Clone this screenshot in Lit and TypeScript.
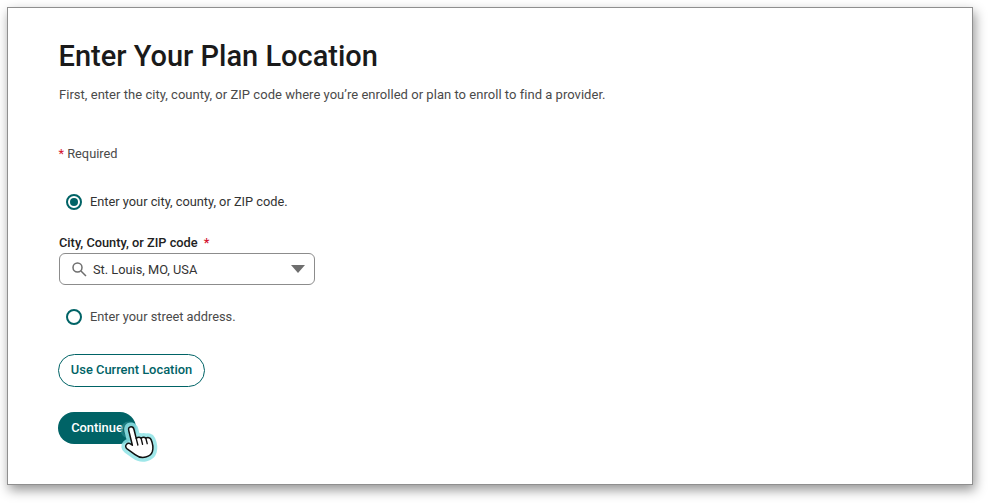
import { LitElement, html, css } from 'lit';
import { customElement } from 'lit/decorators.js';

const HAND =
  'M8.500 4C10 4 11 5.100 11 6.700V14c1.500-.6 3-.3 3.800.8 1.500-.6 3-.2 3.700 1 1.700-.6 3.500.3 3.800 2.100.6 3.500.2 6.800-1.300 9.500-1.200 2-3.500 3-6.200 3-3.400 0-5.700-1.300-7.800-4L1.900 20.400c-1-1.300-.8-2.800.3-3.500 1.100-.8 2.600-.5 3.600.7l.9 1V6.700C6.700 5.100 7.200 4 8.500 4z';

@customElement('app-root')
export class AppRoot extends LitElement {
  static styles = css`
    :host {
      display: block;
      width: 1000px;
      height: 503px;
      padding: 7px 27px 18px 7px;
      box-sizing: border-box;
      background: #fff;
      overflow: hidden;
      font-family: Roboto, 'Liberation Sans', sans-serif;
      color: #4a4a4a;
    }

    .card {
      height: 478px;
      box-sizing: border-box;
      padding: 30px 50px 0;
      background: #fff;
      border: 1px solid #8f8f8f;
      box-shadow: 2px 5px 11px rgba(0, 0, 0, 0.42);
    }

    h1 {
      margin: 0 0 0 0.5px;
      font-size: 29px;
      line-height: 36px;
      font-weight: 500;
      color: #1a1a1a;
    }

    .intro {
      margin: 12px 0 0 1px;
      font-size: 13px;
      line-height: 18px;
      letter-spacing: 0.03px;
    }

    .required {
      margin-top: 41px;
      font-size: 12.8px;
      line-height: 18px;
    }

    .required .star {
      margin-left: 0.5px;
    }

    .star {
      color: #d3132f;
    }

    .radio-row {
      display: flex;
      align-items: center;
      gap: 8px;
      margin-left: 8px;
      font-size: 12.8px;
      line-height: 18px;
    }

    .radio-row.first {
      margin-top: 30px;
    }

    .radio-row.second {
      margin-top: 23px;
    }

    .radio-row.on {
      color: #333;
    }

    .radio {
      width: 16px;
      height: 16px;
      box-sizing: border-box;
      border: 2px solid #006366;
      border-radius: 50%;
      display: flex;
      align-items: center;
      justify-content: center;
    }

    .radio i {
      width: 8px;
      height: 8px;
      border-radius: 50%;
      background: #006366;
    }

    .field-label {
      margin: 23px 0 0 1px;
      font-size: 12.8px;
      line-height: 18px;
      font-weight: 500;
      color: #222;
    }

    .field-label .star {
      margin-left: 3px;
    }

    .select {
      display: flex;
      align-items: center;
      width: 256px;
      height: 32px;
      margin: 1px 0 0 1px;
      padding: 0 9px 0 11px;
      box-sizing: border-box;
      border: 1px solid #8c8c8c;
      border-radius: 6px;
      font-size: 12.8px;
      color: #333;
    }

    .select svg {
      margin-right: 6px;
    }

    .select span {
      flex: 1;
    }

    .arrow {
      width: 0;
      height: 0;
      border-left: 7.5px solid transparent;
      border-right: 7.5px solid transparent;
      border-top: 8px solid #6e6e6e;
    }

    .btn {
      display: flex;
      align-items: center;
      justify-content: center;
      box-sizing: border-box;
      height: 33px;
      border-radius: 17px;
      padding-bottom: 2px;
      font-size: 12.9px;
      font-weight: 500;
    }

    .outline {
      width: 147px;
      margin-top: 28px;
      border: 1px solid #006366;
      color: #006366;
    }

    .continue-wrap {
      position: relative;
      width: 78px;
      margin-top: 25px;
    }

    .solid {
      height: 32px;
      padding-bottom: 1px;
      background: #006366;
      color: #fff;
    }

    .cursor {
      position: absolute;
      left: 56px;
      top: 3px;
    }
  `;

  render() {
    return html`
      <div class="card">
        <h1>Enter Your Plan Location</h1>
        <p class="intro">First, enter the city, county, or ZIP code where you’re enrolled or plan to enroll to find a provider.</p>
        <div class="required"><span class="star">*</span> Required</div>

        <div class="radio-row first on">
          <span class="radio"><i></i></span>
          Enter your city, county, or ZIP code.
        </div>

        <div class="field-label">City, County, or ZIP code <span class="star">*</span></div>
        <div class="select">
          <svg width="16" height="16" viewBox="0 0 16 16" fill="none" stroke="#6e6e6e" stroke-width="1.5">
            <circle cx="6.500" cy="6.500" r="4.500"></circle>
            <path d="M10 10l5 5"></path>
          </svg>
          <span>St. Louis, MO, USA</span>
          <div class="arrow"></div>
        </div>

        <div class="radio-row second">
          <span class="radio"></span>
          Enter your street address.
        </div>

        <div class="btn outline">Use Current Location</div>

        <div class="continue-wrap">
          <div class="btn solid">Continue</div>
          <svg class="cursor" width="52" height="52" viewBox="0 0 52 52">
            <circle cx="15" cy="15" r="8.500" fill="#2f8f92" opacity="0.6"></circle>
            <circle cx="15" cy="15" r="5.500" fill="none" stroke="#0a4d50" stroke-width="1" opacity="0.6"></circle>
            <g transform="translate(26.500 28.500) scale(1.250) translate(-21.500 -25.500) translate(8 7) rotate(-14 12 18)">
              <path d=${HAND} fill="#8fe3e6" stroke="#8fe3e6" stroke-width="7" stroke-linejoin="round" opacity="0.85"></path>
              <path d=${HAND} fill="#fff" stroke="#111" stroke-width="1.200" stroke-linejoin="round"></path>
              <path d="M11 14v5.500M14.800 14.800v5M18.500 15.800v4.500" fill="none" stroke="#111" stroke-width="1.100" stroke-linecap="round"></path>
            </g>
          </svg>
        </div>
      </div>
    `;
  }
}
